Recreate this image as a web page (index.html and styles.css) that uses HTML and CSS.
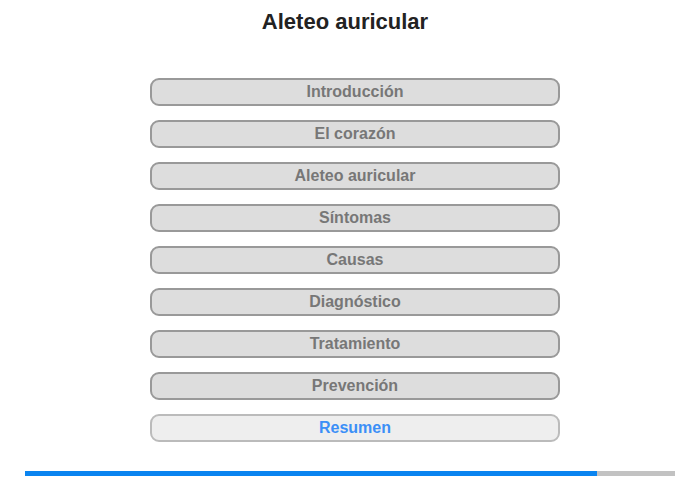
FILE: index.html
```
<!DOCTYPE html>
<html lang="es">
<head>
    <meta charset="UTF-8">
    <title>Aleteo auricular</title>
    <link rel="stylesheet" href="styles.css">
</head>
<body>

    <h1>Aleteo auricular</h1>

    <div class="menu">
        <button class="item">Introducción</button>
        <button class="item">El corazón</button>
        <button class="item">Aleteo auricular</button>
        <button class="item">Síntomas</button>
        <button class="item">Causas</button>
        <button class="item">Diagnóstico</button>
        <button class="item">Tratamiento</button>
        <button class="item">Prevención</button>
        <button class="item current">Resumen</button>
    </div>

    <div class="progress">
        <div class="progress-fill" style="width: 88%;"></div>
    </div>

</body>
</html>
```
FILE: styles.css
```
body {
    margin: 0;
    background-color: #fff;
    font-family: "Liberation Sans", Arial, sans-serif;
}
h1 {
    margin: 0;
    padding: 9px 10px 0 0;
    font-size: 22px;
    line-height: 25px;
    text-align: center;
    color: #222;
}
.menu {
    display: flex;
    flex-direction: column;
    gap: 14px;
    width: 410px;
    margin: 44px 0 0 150px;
}
.item {
    box-sizing: border-box;
    height: 28px;
    padding: 0;
    border: 2px solid #999;
    border-radius: 9px;
    background-color: #ddd;
    color: #777;
    font-family: "Liberation Sans", Arial, sans-serif;
    font-size: 16px;
    font-weight: bold;
    cursor: pointer;
}
.item.current {
    border-color: #bbb;
    background-color: #eee;
    color: #3b8ff7;
}
.progress {
    height: 5px;
    margin: 29px 25px 0 25px;
    background-color: #c2c2c2;
}
.progress-fill {
    height: 100%;
    background-color: #0a84f0;
}
```
